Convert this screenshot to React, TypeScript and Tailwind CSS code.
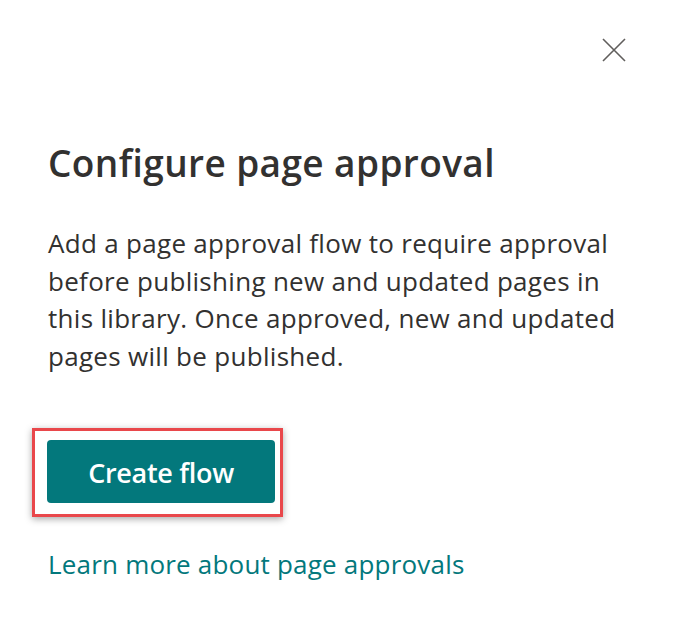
const App = () => {
  return (
    <div className="min-h-[631px] w-[678px] bg-white font-['Open_Sans',sans-serif] text-[#323130]">
      <div className="flex justify-end pr-[50px] pt-[36px]">
        <button className="flex h-[28px] w-[28px] items-center justify-center text-[#605e5c]" aria-label="Close">
          <svg width="24" height="24" viewBox="0 0 24 24" fill="none" stroke="currentColor" strokeWidth="1.6">
            <path d="M1 1L23 23M23 1L1 23" />
          </svg>
        </button>
      </div>
      <div className="pl-[48px] pr-[50px]">
        <h1 className="mt-[75px] text-[37px] font-semibold leading-[48px] tracking-[0.4px]">
          Configure page approval
        </h1>
        <p className="mt-[38px] text-[26px] leading-[37.5px] tracking-[0.3px]">
          Add a page approval flow to require approval before publishing new and updated pages in this
          library. Once approved, new and updated pages will be published.
        </p>
        <div className="mt-[53px] -ml-[16px] inline-block border-[3px] border-[#e9474b] pb-[11px] pl-[12px] pr-[5px] pt-[9px] shadow-[0_2px_7px_rgba(0,0,0,0.35)]">
          <button className="flex h-[63px] w-[228px] items-center justify-center rounded-[4px] bg-[#03787c] pt-[3px] text-[27px] font-semibold tracking-[-0.3px] text-white">
            Create flow
          </button>
        </div>
        <div className="mt-[29px]">
          <a href="#" className="text-[26px] leading-[37px] tracking-[0.2px] text-[#03787c]">
            Learn more about page approvals
          </a>
        </div>
      </div>
    </div>
  );
};

export default App;
